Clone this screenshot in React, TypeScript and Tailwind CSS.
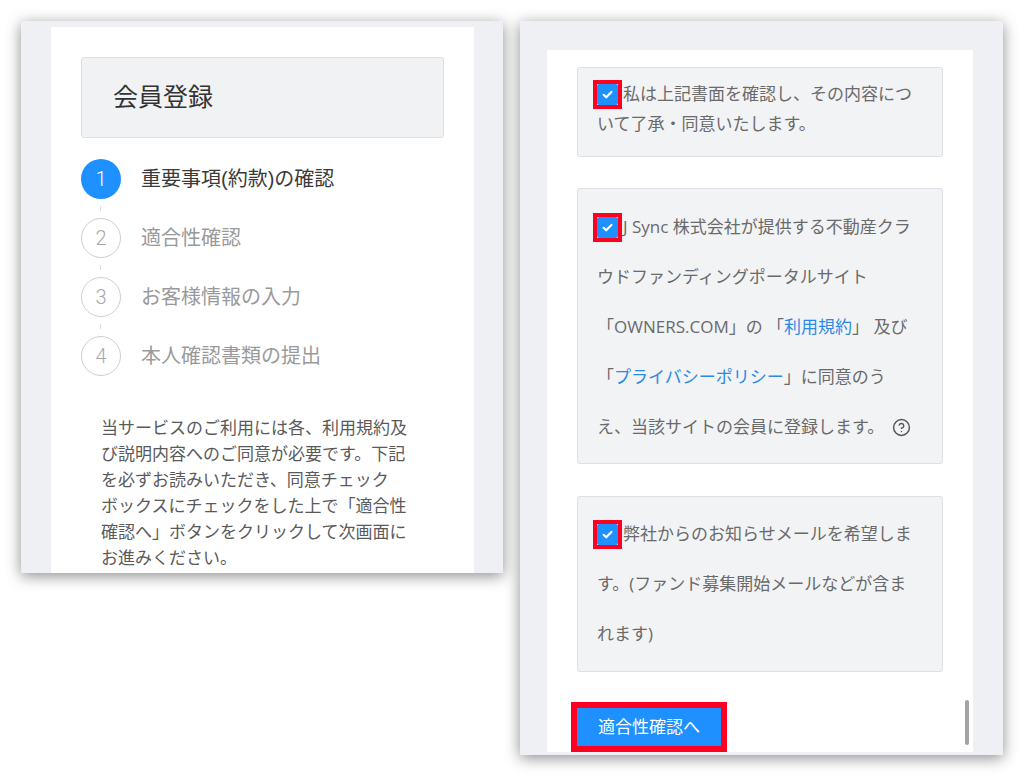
import { CircleHelp } from "lucide-react";

const steps = ["重要事項(約款)の確認", "適合性確認", "お客様情報の入力", "本人確認書類の提出"];

function Checked() {
  return (
    <span className="relative -top-px -ml-[4px] mr-px inline-flex h-[29px] w-[29px] items-center justify-center border-[4px] border-[#ff0022] align-middle">
      <span className="flex h-[21px] w-[21px] items-center justify-center rounded-[2px] bg-[#1e90ff]">
        <svg viewBox="0 0 12 12" className="h-[13px] w-[13px]">
          <path
            d="M2.4 6.3l2.4 2.3 4.8-5"
            fill="none"
            stroke="#fff"
            strokeWidth="2"
            strokeLinecap="round"
            strokeLinejoin="round"
          />
        </svg>
      </span>
    </span>
  );
}

function StepList() {
  return (
    <div className="mt-[21px]">
      {steps.map((label, i) => (
        <div key={label}>
          {i > 0 && (
            <div className="flex h-[19px] items-center pl-[19px]">
              <div className="h-[5px] w-px bg-[#dcdcdc]" />
            </div>
          )}
          <div className="flex h-[40px] items-center">
            {i === 0 ? (
              <div className="flex h-[40px] w-[40px] items-center justify-center rounded-full bg-[#1e90ff] font-['Roboto'] text-[20px] font-light text-white">
                1
              </div>
            ) : (
              <div className="flex h-[40px] w-[40px] items-center justify-center rounded-full border border-[#cfcfcf] font-['Roboto'] text-[20px] font-light text-[#a8a8a8]">
                {i + 1}
              </div>
            )}
            <span
              className={
                i === 0
                  ? "ml-[20px] text-[20px] text-[#3a3a3a]"
                  : "ml-[20px] text-[20px] text-[#9a9a9a]"
              }
            >
              {label}
            </span>
          </div>
        </div>
      ))}
    </div>
  );
}

export default function App() {
  return (
    <div className="flex h-[776px] w-[1024px] items-start gap-[17px] overflow-hidden bg-white pl-[21px] pt-[21px] font-['Liberation_Sans','Noto_Sans_CJK_JP',sans-serif]">
      {/* 会員登録 step overview */}
      <div className="h-[552px] w-[482px] overflow-hidden bg-[#eef0f4] pl-[30px] pr-[29px] pt-[6px] shadow-[0_3px_14px_rgba(0,0,0,0.45)]">
        <div className="h-full bg-white px-[30px] pt-[30px]">
          <div className="flex h-[81px] items-center rounded-[3px] border border-[#dcdfe3] bg-[#f1f2f4] pl-[31px] text-[25px] text-[#333]">
            会員登録
          </div>

          <StepList />

          <p className="mt-[40px] pl-[20px] text-[17px] leading-[26px] text-[#5a5a5a]">
            当サービスのご利用には各、利用規約及
            <br />
            び説明内容へのご同意が必要です。下記
            <br />
            を必ずお読みいただき、同意チェック
            <br />
            ボックスにチェックをした上で「適合性
            <br />
            確認へ」ボタンをクリックして次画面に
            <br />
            お進みください。
          </p>
        </div>
      </div>

      {/* 同意チェック */}
      <div className="h-[734px] w-[483px] overflow-hidden bg-[#eef0f4] pb-[3px] pl-[27px] pr-[30px] pt-[29px] font-['Open_Sans','Noto_Sans_CJK_JP',sans-serif] shadow-[0_3px_14px_rgba(0,0,0,0.45)]">
        <div className="relative h-full overflow-hidden bg-white px-[30px] pt-[17px] text-[17px] text-[#6a6a6a]">
          <div className="h-[90px] rounded-[3px] border border-[#dcdfe3] bg-[#f2f3f5] pl-[19px] pt-[12px] leading-[27px]">
            <Checked />
            私は上記書面を確認し、その内容につ
            <br />
            いて了承・同意いたします。
          </div>

          <div className="mt-[31px] rounded-[3px] border border-[#dcdfe3] bg-[#f2f3f5] pb-[11px] pl-[19px] pt-[13px] leading-[50px]">
            <Checked />J Sync 株式会社が提供する不動産クラ
            <br />
            ウドファンディングポータルサイト
            <br />
            「OWNERS.COM」の 「<a className="text-[#2b8ae6]">利用規約</a>」 及び
            <br />
            「<a className="text-[#2b8ae6]">プライバシーポリシー</a>」に同意のう
            <br />
            え、当該サイトの会員に登録します。
            <CircleHelp
              size={19}
              strokeWidth={1.8}
              className="relative -top-px ml-[8px] inline-block align-middle text-[#555]"
            />
          </div>

          <div className="mt-[32px] rounded-[3px] border border-[#dcdfe3] bg-[#f2f3f5] pb-[12px] pl-[19px] pt-[12px] leading-[50px]">
            <Checked />
            弊社からのお知らせメールを希望しま
            <br />
            す。(ファンド募集開始メールなどが含ま
            <br />
            れます)
          </div>

          <button className="mt-[36px] h-[38px] w-[144px] bg-[#1e90ff] text-[17px] text-white outline-solid outline-[6px] outline-[#ff0022]">
            適合性確認へ
          </button>

          <div className="absolute bottom-[7px] right-[4px] h-[45px] w-[4px] rounded-full bg-[#a3a3a3]" />
        </div>
      </div>
    </div>
  );
}
